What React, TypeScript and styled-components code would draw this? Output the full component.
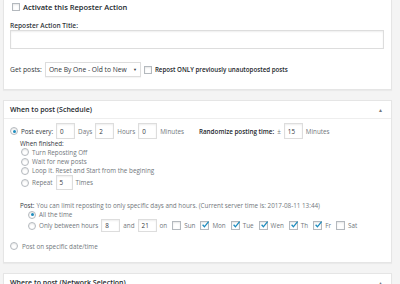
import React from "react";
import styled, { createGlobalStyle } from "styled-components";

const GlobalStyle = createGlobalStyle`
  html, body {
    margin: 0;
    padding: 0;
    background: #f4f4f4;
  }
  body {
    font-family: "Open Sans", "Noto Sans", sans-serif;
    color: #555d66;
    overflow: hidden;
  }
`;

const Page = styled.div`
  width: 389px;
  margin-left: 3px;
  display: flex;
  flex-direction: column;
  gap: 10px;
`;

const Postbox = styled.div<{ $clipped?: boolean }>`
  background: #fff;
  border: 1px solid #e5e5e5;
  border-top-width: ${(props) => (props.$clipped ? "0" : "1px")};
  box-shadow: 0 1px 1px rgba(0, 0, 0, 0.04);
`;

const PostboxHeader = styled.div`
  height: 17px;
  display: flex;
  align-items: center;
  justify-content: space-between;
  padding: 0 8px 0 6px;
  border-bottom: 1px solid #eee;
  font-size: 7px;
  font-weight: 600;
  color: #23282d;
`;

const Toggle = styled.span`
  font-size: 5px;
  color: #72777c;
`;

const Inside = styled.div<{ $pad: string }>`
  padding: ${(props) => props.$pad};
  display: flex;
  flex-direction: column;
`;

const Row = styled.div<{ $h: number; $mt?: number; $indent?: number; $gap?: number }>`
  height: ${(props) => props.$h}px;
  margin-top: ${(props) => props.$mt || 0}px;
  margin-left: ${(props) => props.$indent || 0}px;
  display: flex;
  align-items: center;
  gap: ${(props) => props.$gap ?? 3}px;
  font-size: 6.3px;
  white-space: nowrap;
`;

const Strong = styled.span<{ $size?: number }>`
  font-weight: 600;
  color: #23282d;
  font-size: ${(props) => props.$size || 6.3}px;
`;

const Dark = styled.span<{ $size?: number }>`
  color: #32373c;
  font-size: ${(props) => (props.$size ? `${props.$size}px` : "inherit")};
`;

const Muted = styled.span`
  color: #72777c;
`;

const FieldLabel = styled.div`
  height: 10px;
  margin-top: 6px;
  display: flex;
  align-items: center;
  font-size: 6.6px;
  font-weight: 600;
  color: #32373c;
`;

const TitleInput = styled.div`
  height: 19px;
  border: 1px solid #ddd;
  box-shadow: inset 0 1px 2px rgba(0, 0, 0, 0.07);
  box-sizing: border-box;
  background: #fff;
`;

const NumInput = styled.span<{ $w?: number; $h?: number }>`
  box-sizing: border-box;
  width: ${(props) => props.$w || 19}px;
  height: ${(props) => props.$h || 16}px;
  border: 1px solid #ddd;
  box-shadow: inset 0 1px 2px rgba(0, 0, 0, 0.07);
  display: inline-flex;
  align-items: center;
  padding-left: 3px;
  font-size: 6.3px;
  color: #32373c;
  flex-shrink: 0;
`;

const Select = styled.span`
  box-sizing: border-box;
  width: 96px;
  height: 15px;
  border: 1px solid #ddd;
  box-shadow: 0 1px 1px rgba(0, 0, 0, 0.04);
  display: inline-flex;
  align-items: center;
  justify-content: space-between;
  padding: 0 3px 0 3px;
  font-size: 6.7px;
  color: #32373c;
`;

const Caret = styled.span`
  font-size: 4px;
  color: #32373c;
`;

const Radio = styled.span<{ $checked?: boolean }>`
  box-sizing: border-box;
  width: 8px;
  height: 8px;
  border-radius: 50%;
  border: 1px solid #b4b9be;
  background: #fff;
  box-shadow: inset 0 1px 2px rgba(0, 0, 0, 0.1);
  display: inline-flex;
  align-items: center;
  justify-content: center;
  flex-shrink: 0;

  &::after {
    content: "";
    display: ${(props) => (props.$checked ? "block" : "none")};
    width: 3px;
    height: 3px;
    border-radius: 50%;
    background: #1e8cbe;
  }
`;

const CheckBox = styled.span<{ $size?: number }>`
  box-sizing: border-box;
  width: ${(props) => props.$size || 8}px;
  height: ${(props) => props.$size || 8}px;
  border: 1px solid #b4b9be;
  background: #fff;
  box-shadow: inset 0 1px 2px rgba(0, 0, 0, 0.1);
  display: inline-flex;
  align-items: center;
  justify-content: center;
  flex-shrink: 0;
  position: relative;

  svg {
    position: absolute;
    left: 0;
    top: -2px;
  }
`;

const DayGroup = styled.span`
  display: inline-flex;
  align-items: center;
  gap: 3px;
  margin-right: 2px;
  color: #72777c;
`;

const Check = ({ checked, size }: { checked?: boolean; size?: number }) => (
  <CheckBox $size={size}>
    {checked && (
      <svg width="9" height="9" viewBox="0 0 9 9">
        <path d="M1.6 4.8 L3.4 6.8 L7.6 1.6" fill="none" stroke="#1e8cbe" strokeWidth="1.3" />
      </svg>
    )}
  </CheckBox>
);

const days: [string, boolean][] = [
  ["Sun", false],
  ["Mon", true],
  ["Tue", true],
  ["Wen", true],
  ["Th", true],
  ["Fr", true],
  ["Sat", false],
];

const finishOptions = ["Turn Reposting Off", "Wait for new posts", "Loop it. Reset and Start from the begining"];

const App = () => {
  return (
    <>
      <GlobalStyle />
      <Page>
        <Postbox $clipped>
          <Inside $pad="0 7px 12px 6px">
            <Row $h={14} $indent={2} $gap={3}>
              <CheckBox />
              <Strong $size={7.5}>Activate this Reposter Action</Strong>
            </Row>
            <FieldLabel>Reposter Action Title:</FieldLabel>
            <TitleInput />
            <Row $h={15} $mt={13} $gap={3}>
              <Dark $size={6.8}>Get posts:</Dark>
              <Select>
                One By One - Old to New <Caret>▼</Caret>
              </Select>
              <Check />
              <Strong $size={6.2}>Repost ONLY previously unautoposted posts</Strong>
            </Row>
          </Inside>
        </Postbox>

        <Postbox>
          <PostboxHeader>
            When to post (Schedule)
            <Toggle>▲</Toggle>
          </PostboxHeader>
          <Inside $pad="4px 6px 11px 6px">
            <Row $h={16} $gap={3}>
              <Radio $checked />
              <Dark>Post every:</Dark>
              <NumInput>0</NumInput>
              <Muted>Days</Muted>
              <NumInput>2</NumInput>
              <Muted>Hours</Muted>
              <NumInput>0</NumInput>
              <Muted>Minutes</Muted>
              <Strong style={{ marginLeft: 12 }}>Randomize posting time:</Strong>
              <Muted>±</Muted>
              <NumInput>15</NumInput>
              <Muted>Minutes</Muted>
            </Row>
            <Row $h={8} $indent={10}>
              <Dark>When finished:</Dark>
            </Row>
            {finishOptions.map((option, index) => (
              <Row key={option} $h={index === 0 ? 10 : 9} $indent={11}>
                <Radio />
                <Muted>{option}</Muted>
              </Row>
            ))}
            <Row $h={15} $indent={11}>
              <Radio />
              <Muted>Repeat</Muted>
              <NumInput $w={17} $h={15}>5</NumInput>
              <Muted>Times</Muted>
            </Row>
            <Row $h={10} $mt={10} $indent={10} $gap={2}>
              <Dark>Post:</Dark>
              <Muted>You can limit reposting to only specific days and hours. (Current server time is: 2017-08-11 13:44)</Muted>
            </Row>
            <Row $h={9} $indent={18}>
              <Radio $checked />
              <Muted>All the time</Muted>
            </Row>
            <Row $h={13} $indent={18}>
              <Radio />
              <Muted>Only between hours</Muted>
              <NumInput $h={13}>8</NumInput>
              <Muted>and</Muted>
              <NumInput $h={13}>21</NumInput>
              <Muted style={{ marginRight: 2 }}>on</Muted>
              {days.map(([day, checked]) => (
                <DayGroup key={day}>
                  <Check checked={checked} size={9} />
                  {day}
                </DayGroup>
              ))}
            </Row>
            <Row $h={10} $mt={9} $gap={4}>
              <Radio />
              <Muted>Post on specific date/time</Muted>
            </Row>
          </Inside>
        </Postbox>

        <Postbox>
          <PostboxHeader>
            Where to post (Network Selection)
            <Toggle>▲</Toggle>
          </PostboxHeader>
        </Postbox>
      </Page>
    </>
  );
};

export default App;
